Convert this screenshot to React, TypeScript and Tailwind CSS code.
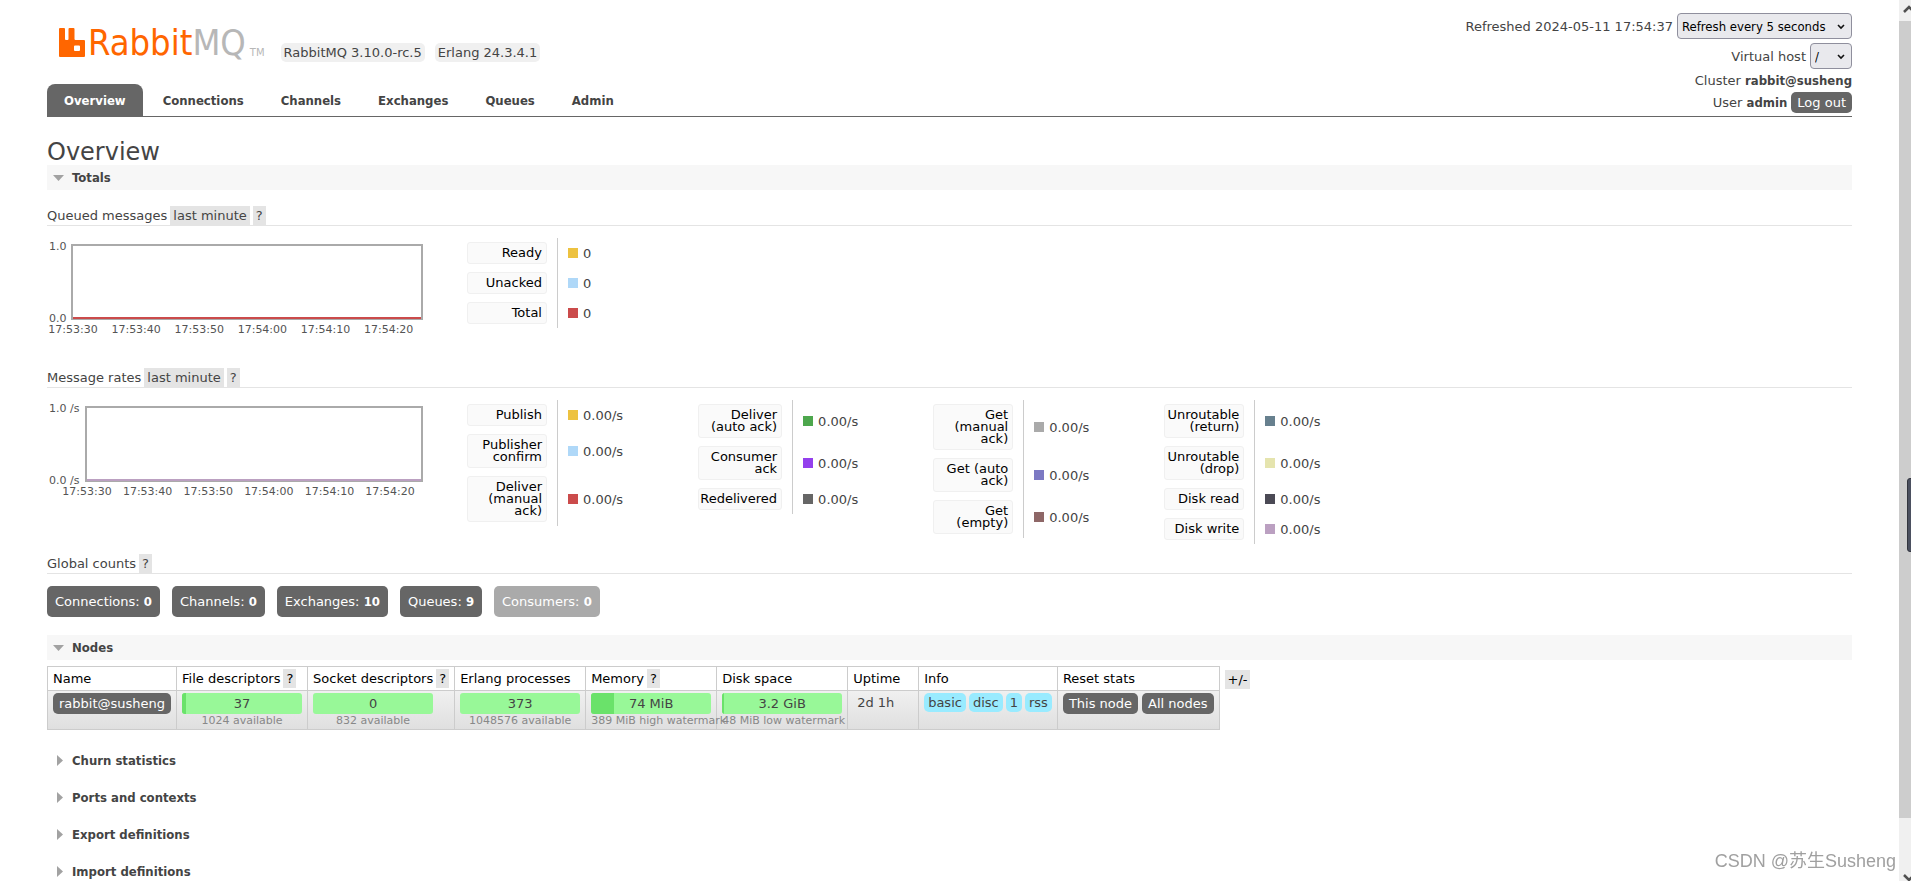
import type { ReactNode } from "react";
import clsx from "clsx";

const tabs = ["Overview", "Connections", "Channels", "Exchanges", "Queues", "Admin"];

type LegendItem = { label: string; swatch: string; value: string };

const queued: LegendItem[] = [
  { label: "Ready", swatch: "bg-[#edc240]", value: "0" },
  { label: "Unacked", swatch: "bg-[#afd8f8]", value: "0" },
  { label: "Total", swatch: "bg-[#cb4b4b]", value: "0" },
];

const rates: LegendItem[][] = [
  [
    { label: "Publish", swatch: "bg-[#edc240]", value: "0.00/s" },
    { label: "Publisher confirm", swatch: "bg-[#afd8f8]", value: "0.00/s" },
    { label: "Deliver (manual ack)", swatch: "bg-[#cb4b4b]", value: "0.00/s" },
  ],
  [
    { label: "Deliver (auto ack)", swatch: "bg-[#4da74d]", value: "0.00/s" },
    { label: "Consumer ack", swatch: "bg-[#9440ed]", value: "0.00/s" },
    { label: "Redelivered", swatch: "bg-[#666666]", value: "0.00/s" },
  ],
  [
    { label: "Get (manual ack)", swatch: "bg-[#aaaaaa]", value: "0.00/s" },
    { label: "Get (auto ack)", swatch: "bg-[#7c79c3]", value: "0.00/s" },
    { label: "Get (empty)", swatch: "bg-[#8e6767]", value: "0.00/s" },
  ],
  [
    { label: "Unroutable (return)", swatch: "bg-[#67808e]", value: "0.00/s" },
    { label: "Unroutable (drop)", swatch: "bg-[#e5e4ae]", value: "0.00/s" },
    { label: "Disk read", swatch: "bg-[#4b4a55]", value: "0.00/s" },
    { label: "Disk write", swatch: "bg-[#bba0c1]", value: "0.00/s" },
  ],
];

const times = ["17:53:30", "17:53:40", "17:53:50", "17:54:00", "17:54:10", "17:54:20"];

const counts = [
  { label: "Connections", value: 0 },
  { label: "Channels", value: 0 },
  { label: "Exchanges", value: 10 },
  { label: "Queues", value: 9 },
  { label: "Consumers", value: 0, disabled: true },
];

const bold = "font-['DejaVu_Sans_Condensed','DejaVu_Sans',sans-serif] font-bold";
const darkButton = "inline-block rounded-[5px] bg-[#666] text-white";

function Help() {
  return (
    <button type="button" aria-label="Help" className="h-[19px] bg-[#e4e4e4] px-[3px] leading-[19px]">
      ?
    </button>
  );
}

function Logo() {
  return (
    <a href="#" className="ml-3 mr-4 flex items-end">
      <svg width="26" height="29" viewBox="0 0 26 29" className="mb-[5px]" aria-hidden="true">
        <path
          fill="#f60"
          fillRule="evenodd"
          d="M1 0h4q1 0 1 1v10q0 1 1 1h1.500q1 0 1-1V1q0-1 1-1h4q1 0 1 1v10q0 1 1 1h8.500q1 0 1 1v15q0 1-1 1H1q-1 0-1-1V1q0-1 1-1zM16 17.500q-1 0-1 1v3.500q0 1 1 1h4q1 0 1-1v-3.500q0-1-1-1z"
        />
      </svg>
      <span className="ml-[3px] font-['DejaVu_Sans_Condensed','DejaVu_Sans',sans-serif] text-[36px] leading-[38px] text-[#f60]">
        Rabbit<span className="text-[#b7b7b7]">MQ</span>
      </span>
      <span className="mb-1 ml-1 text-[10px] leading-[10px] text-[#b7b7b7]">TM</span>
    </a>
  );
}

function SelectBox({ id, text, width }: { id: string; text: string; width: string }) {
  return (
    <span className={clsx("relative block h-[26px]", width)}>
      <select
        id={id}
        className="h-full w-full appearance-none rounded-[4px] border border-[#8f8f9d] bg-[#e9e9ed] pl-1 font-['DejaVu_Sans_Condensed','DejaVu_Sans',sans-serif] text-[13px] text-black"
      >
        <option>{text}</option>
      </select>
      <svg width="8" height="6" viewBox="0 0 8 6" className="pointer-events-none absolute right-[7px] top-[11px]" aria-hidden="true">
        <path d="M1 1l3 3 3-3" fill="none" stroke="#111" strokeWidth="1.6" />
      </svg>
    </span>
  );
}

function Status() {
  return (
    <div className="flex flex-col items-end gap-1 pt-[13px]">
      <div className="flex items-center gap-1">
        <label htmlFor="refresh">Refreshed 2024-05-11 17:54:37</label>
        <SelectBox id="refresh" text="Refresh every 5 seconds" width="w-[175px]" />
      </div>
      <div className="flex items-center gap-1">
        <label htmlFor="vhost">Virtual host</label>
        <SelectBox id="vhost" text="/" width="w-[42px]" />
      </div>
      <p className="leading-[15px]">
        Cluster <b className={bold}>rabbit@susheng</b>
      </p>
      <div className="flex items-center gap-1">
        <span>
          User <b className={bold}>admin</b>
        </span>
        <button type="button" className={clsx(darkButton, "h-[21px] px-[6px]")}>
          Log out
        </button>
      </div>
    </div>
  );
}

function SectionBar({ title, open }: { title: string; open?: boolean }) {
  return (
    <h2 className={clsx("h-[25px]", open && "bg-[#f7f7f7]")}>
      <button type="button" aria-expanded={!!open} className={clsx("flex h-full w-full items-center text-left", bold)}>
        <svg width="25" height="12" viewBox="0 0 25 12" fill="#a2a2a2" aria-hidden="true">
          {open ? <path d="M6 3h11l-5.500 6z" /> : <path d="M10 0v11l6-5.500z" />}
        </svg>
        {title}
      </button>
    </h2>
  );
}

function Heading({ title, period }: { title: string; period?: boolean }) {
  return (
    <div className="flex items-center gap-[3px] border-b border-[#e4e4e4] leading-[19px]">
      <h3>{title}</h3>
      {period && (
        <button type="button" className="h-[19px] bg-[#e4e4e4] px-[3px]">
          last minute
        </button>
      )}
      <Help />
    </div>
  );
}

function Chart({ unit, left, line }: { unit: string; left: number; line: string }) {
  const step = (376 - left) / 5.56;
  return (
    <svg width="380" height="100" className="mr-10 shrink-0 text-[11px]" fill="#545454">
      <text x="2" y="12">{`1.0${unit}`}</text>
      <text x="2" y="84">{`0.0${unit}`}</text>
      <rect x={left} y="7" width={375 - left} height="74" fill="none" stroke="#aaa" strokeWidth="2" />
      <path d={`M${left + 1} 80H374`} stroke={line} strokeWidth="2" />
      {times.map((time, i) => (
        <text key={time} x={left + 1 + i * step} y="95" textAnchor="middle">
          {time}
        </text>
      ))}
    </svg>
  );
}

function Legend({ items, wide }: { items: LegendItem[]; wide?: boolean }) {
  return (
    <table className="mr-[75px] border-separate border-spacing-0">
      <tbody>
        {items.map((item) => (
          <tr key={item.label}>
            <th className="border-r border-[#ccc] py-1 pr-[10px] text-right align-middle font-normal">
              <div
                className={clsx(
                  "rounded-[3px] border border-[#f0f0f0] bg-[#fafafa] py-1 pl-px pr-1 leading-3 text-black",
                  wide ? "w-[84px]" : "w-20",
                )}
              >
                {item.label}
              </div>
            </th>
            <td className="w-[65px] pl-[10px] align-middle">
              <div className="flex items-center gap-[5px]">
                <span className={clsx("size-[10px]", item.swatch)} />
                {item.value}
              </div>
            </td>
          </tr>
        ))}
      </tbody>
    </table>
  );
}

function Meter({ value, note, fill }: { value: string; note: string; fill: number }) {
  return (
    <div className="w-[120px]">
      <div className="relative h-[21px] overflow-hidden rounded-[3px] bg-[#98f898] text-center leading-[21px]">
        <div className="absolute inset-y-0 left-0 bg-[#6ae26a]" style={{ width: `${fill}%` }} />
        <span className="relative">{value}</span>
      </div>
      <div className="whitespace-nowrap text-center text-[11px] leading-[13px] text-[#888]">{note}</div>
    </div>
  );
}

function Th({ children, help }: { children: ReactNode; help?: boolean }) {
  return (
    <th className="border border-[#ccc] px-[5px] py-0 text-left font-normal text-black">
      <div className="flex h-[23px] items-center gap-[3px] whitespace-nowrap">
        {children}
        {help && <Help />}
      </div>
    </th>
  );
}

function Td({ children }: { children: ReactNode }) {
  return <td className="border border-[#ccc] px-[5px] py-[2px] align-top">{children}</td>;
}

function Nodes() {
  return (
    <div className="mt-[6px] flex items-start gap-[5px]">
      <table className="border-collapse">
        <thead>
          <tr>
            <Th>Name</Th>
            <Th help>File descriptors</Th>
            <Th help>Socket descriptors</Th>
            <Th>Erlang processes</Th>
            <Th help>Memory</Th>
            <Th>Disk space</Th>
            <Th>Uptime</Th>
            <Th>Info</Th>
            <Th>Reset stats</Th>
          </tr>
        </thead>
        <tbody>
          <tr className="bg-linear-to-b from-[#f0f0f0] to-[#dfdfdf]">
            <Td>
              <a href="#" className={clsx(darkButton, "h-[21px] px-[6px] leading-[21px]")}>
                rabbit@susheng
              </a>
            </Td>
            <Td>
              <Meter value="37" note="1024 available" fill={3.6} />
            </Td>
            <Td>
              <Meter value="0" note="832 available" fill={0} />
            </Td>
            <Td>
              <Meter value="373" note="1048576 available" fill={0} />
            </Td>
            <Td>
              <Meter value="74 MiB" note="389 MiB high watermark" fill={19} />
            </Td>
            <Td>
              <Meter value="3.2 GiB" note="48 MiB low watermark" fill={1.5} />
            </Td>
            <Td>
              <div className="w-[60px] px-1 leading-[19px]">2d 1h</div>
            </Td>
            <Td>
              <div className="flex gap-[3px] leading-[19px]">
                {["basic", "disc", "1", "rss"].map((tag) => (
                  <span key={tag} className="rounded-[5px] bg-[#99ebff] px-1">
                    {tag}
                  </span>
                ))}
              </div>
            </Td>
            <Td>
              <div className="flex gap-1 whitespace-nowrap">
                <button type="button" className={clsx(darkButton, "h-[21px] px-[6px]")}>
                  This node
                </button>
                <button type="button" className={clsx(darkButton, "h-[21px] px-[6px]")}>
                  All nodes
                </button>
              </div>
            </Td>
          </tr>
        </tbody>
      </table>
      <button type="button" className="mt-1 h-[19px] bg-[#e4e4e4] px-[3px] leading-[19px] text-black">
        +/-
      </button>
    </div>
  );
}

function Scrollbar() {
  return (
    <div className="relative flex w-3 shrink-0 flex-col overflow-hidden bg-[#f0f0f0]" aria-hidden="true">
      <svg width="12" height="21" className="shrink-0">
        <path d="M5 12l5-5 5 5" fill="none" stroke="#505050" strokeWidth="2.5" />
      </svg>
      <div className="h-[797px] bg-[#cdcdcd]" />
      <svg width="12" height="63" className="shrink-0">
        <path d="M5 57l5 5 5-5" fill="none" stroke="#505050" strokeWidth="2.5" />
      </svg>
      <div className="absolute left-2 top-[478px] h-[74px] w-2 rounded-[3px] border border-[#33363f] bg-[#4b5060]" />
    </div>
  );
}

export default function App() {
  return (
    <div className="flex h-screen overflow-hidden bg-white font-['DejaVu_Sans',Verdana,sans-serif] text-[13px] leading-[19px] text-[#444]">
      <div className="min-w-0 flex-1 overflow-hidden px-[47px]">
        <header className="flex justify-between border-b border-[#666]">
          <div className="flex h-[116px] flex-col justify-between">
            <div className="flex h-[62px] items-end">
              <Logo />
              <span className="rounded-[5px] bg-[#f0f0f0] px-[3px]">RabbitMQ 3.10.0-rc.5</span>
              <span className="ml-[10px] rounded-[5px] bg-[#f0f0f0] px-[3px]">Erlang 24.3.4.1</span>
            </div>
            <nav className="flex gap-[3px]">
              {tabs.map((tab, i) => (
                <a
                  key={tab}
                  href="#"
                  className={clsx("rounded-t-lg px-[17px] pt-[2px] leading-[30px]", bold, i === 0 && "bg-[#666] text-white")}
                >
                  {tab}
                </a>
              ))}
            </nav>
          </div>
          <Status />
        </header>

        <main>
          <h1 className="mt-[22px] text-2xl leading-[26px]">Overview</h1>
          <SectionBar title="Totals" open />

          <section className="mt-4">
            <Heading title="Queued messages" period />
            <div className="mt-3 flex items-start">
              <Chart unit="" left={25} line="#cb4b4b" />
              <Legend items={queued} />
            </div>
          </section>

          <section className="mt-[30px]">
            <Heading title="Message rates" period />
            <div className="mt-3 flex items-start">
              <Chart unit=" /s" left={39} line="#bba0c1" />
              {rates.map((items, i) => (
                <Legend key={items[0].label} items={items} wide={i === 1} />
              ))}
            </div>
          </section>

          <section className="mt-[10px]">
            <Heading title="Global counts" />
            <div className="mt-3 flex gap-3 leading-[31px]">
              {counts.map((count) => (
                <a
                  key={count.label}
                  href="#"
                  className={clsx("rounded-[5px] px-2 text-white", count.disabled ? "bg-[#aaa]" : "bg-[#666]")}
                >
                  {count.label}: <b className={bold}>{count.value}</b>
                </a>
              ))}
            </div>
          </section>

          <div className="mt-[18px]">
            <SectionBar title="Nodes" open />
            <Nodes />
          </div>

          <div className="mt-[18px] flex flex-col gap-3">
            <SectionBar title="Churn statistics" />
            <SectionBar title="Ports and contexts" />
            <SectionBar title="Export definitions" />
            <SectionBar title="Import definitions" />
          </div>
        </main>
      </div>
      <Scrollbar />
      <p className="fixed bottom-2 right-[15px] font-['Liberation_Sans','Noto_Sans_CJK_SC',sans-serif] text-lg leading-6 text-[#a0a0a0]">
        CSDN @苏生Susheng
      </p>
    </div>
  );
}
